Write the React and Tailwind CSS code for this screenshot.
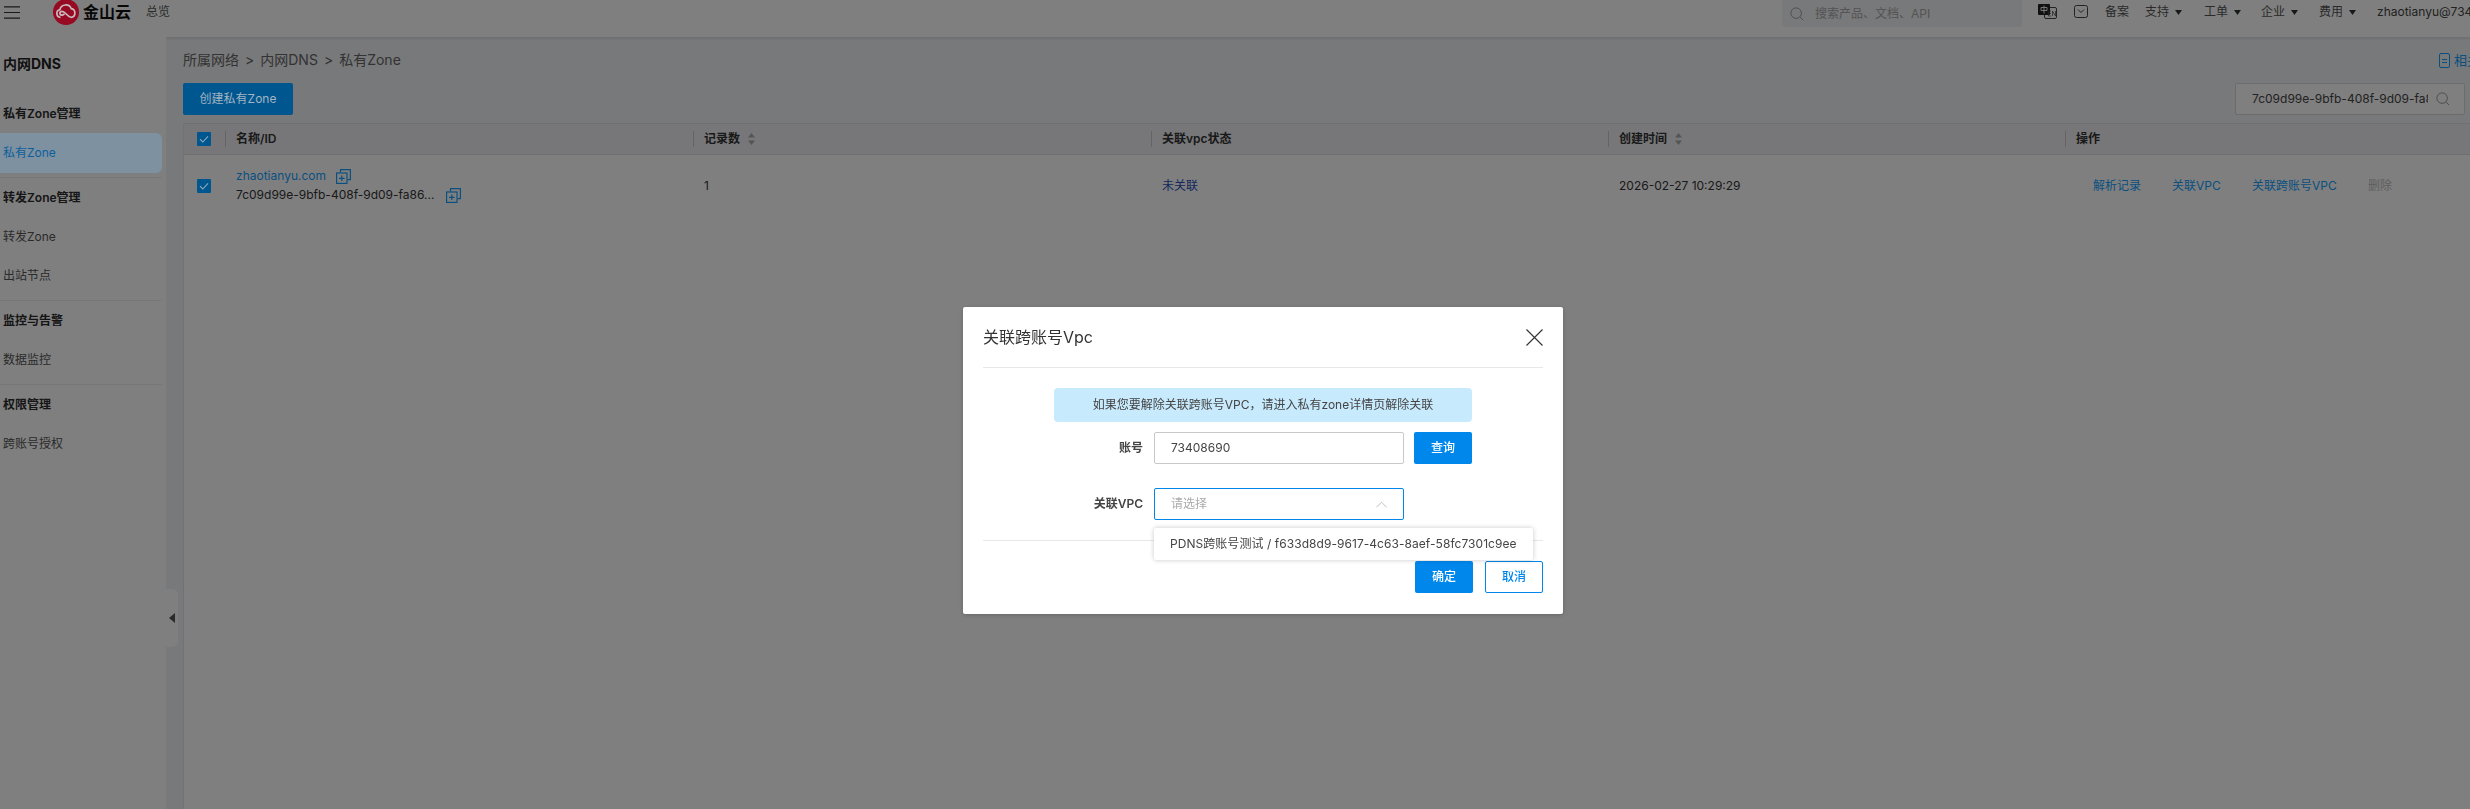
import React from "react";

const font = { fontFamily: 'Inter, "Noto Sans CJK SC", "Noto Sans", sans-serif' };

function Copy({ className = "" }) {
  return (
    <svg viewBox="0 0 15 15" className={"w-[15px] h-[15px] " + className} fill="none" stroke="#14a0ff" strokeWidth="1.2">
      <path d="M4.5 3.5V.6h9.9v10h-2.9" />
      <rect x=".6" y="4" width="10.4" height="10.4" />
      <path d="M5.8 6.6v5.4M3 9.3h5.6" />
    </svg>
  );
}

function Check() {
  return (
    <span className="relative z-30 flex w-[14px] h-[14px] items-center justify-center rounded-[1px] bg-[#00568f]">
      <svg viewBox="0 0 14 14" className="w-[14px] h-[14px]" fill="none" stroke="#8fa9bd" strokeWidth="1.1">
        <path d="M3 7.2l2.8 2.8L11 4.4" />
      </svg>
    </span>
  );
}

function Sort() {
  return (
    <svg viewBox="0 0 7 14" className="w-[7px] h-[14px] ml-[8px]" fill="#a9a9a9">
      <path d="M3.5 1L7 5.5H0zM3.5 13L0 8.5h7z" />
    </svg>
  );
}

function Caret() {
  return (
    <svg viewBox="0 0 7 5" className="w-[7px] h-[5px] ml-[6px]" fill="#333">
      <path d="M0 0h7L3.5 5z" />
    </svg>
  );
}

function TopMenu({ label, width }) {
  return (
    <span className={"flex items-center " + width}>
      <span>{label}</span>
      <Caret />
    </span>
  );
}

function HeadCell({ label, sort }) {
  return (
    <div className="flex items-center h-full">
      <span className="w-px h-[16px] bg-[#c9c9c9]" />
      <span className="ml-[10px] font-semibold text-[#333]">{label}</span>
      {sort && <Sort />}
    </div>
  );
}

function SideGroup({ children, last, pad = "pb-[5px]" }) {
  return <div className={"mr-[4px] " + (last ? "" : "border-b border-[#efefef] " + pad)}>{children}</div>;
}

function SideTitle({ children }) {
  return <div className="h-[39px] pl-[3px] flex items-center text-[12px] font-semibold text-[#2c2c2c]">{children}</div>;
}

function SideItem({ children, active }) {
  return (
    <div
      className={
        "pl-[3px] flex items-center text-[12px] rounded-r-[6px] " +
        (active ? "relative z-30 h-[40px] bg-[#7e91a1] text-[#0c5f9c]" : "h-[39px] text-[#555]")
      }
    >
      {children}
    </div>
  );
}

export default function App() {
  return (
    <div className="relative h-[809px] w-full overflow-hidden bg-[#f0f2f5] text-[12px]" style={font}>
      <header className="relative h-[37px] bg-white flex items-start shadow-[0_1px_3px_rgba(0,0,0,0.12)] overflow-hidden">
        <div className="w-[1782px] shrink-0 flex items-start">
          <svg viewBox="0 0 16 13" className="ml-[4px] mt-[6px] w-[16px] h-[13px]" fill="none" stroke="#333" strokeWidth="1.2">
            <path d="M0 .8h16M0 6.5h16M0 12.2h16" />
          </svg>
          <svg viewBox="0 0 26 26" className="relative z-30 ml-[33px] -mt-[1px] w-[26px] h-[26px]">
            <circle cx="13" cy="13" r="13" fill="#960a23" />
            <path
              d="M7.5 18.300a3.900 3.900 0 0 1-.6-7.700 6 6 0 0 1 11.400-.9 4.400 4.400 0 0 1 .2 8.600c-1.800 0-3-.9-5.300-3.300-2-2.100-3-2.700-4.300-2.700a1.950 1.950 0 0 0 0 3.900c1 0 1.700-.5 2.500-1.300"
              fill="none"
              stroke="#c9b9bd"
              strokeWidth="1.7"
            />
          </svg>
          <span className="ml-[4px] mt-[1px] text-[16px] leading-[22px] font-semibold text-[#111]">金山云</span>
          <span className="ml-[15px] mt-[4px] leading-[16px] text-[#555]">总览</span>
        </div>
        <div className="w-[240px] h-[27px] shrink-0 rounded-b-[3px] bg-[#f1f2f4] flex items-center pl-[8px] text-[12px] text-[#a8a8a8]">
          <svg viewBox="0 0 16 16" className="w-[14px] h-[14px]" fill="none" stroke="#9c9c9c" strokeWidth="1.1">
            <circle cx="7" cy="7" r="6" />
            <path d="M11.500 11.500L15 15" />
          </svg>
          <span className="ml-[11px]">搜索产品、文档、API</span>
        </div>
        <div className="ml-[16px] mt-[4px] relative w-[19px] h-[15px] shrink-0">
          <svg viewBox="0 0 19 15" className="w-[19px] h-[15px]">
            <rect x="6.500" y="3.500" width="12" height="11" rx="1.500" fill="#fff" stroke="#444" />
            <rect x="0" y="0" width="12" height="11" rx="1" fill="#222" />
            <path d="M3 3.500h6v3H3zM6 1.500v8" fill="none" stroke="#fff" strokeWidth=".9" />
            <path d="M13 7h-2.500v5H13M10.500 9.500H13M14.500 12V7l3 5V7" fill="none" stroke="#444" strokeWidth=".7" />
          </svg>
        </div>
        <svg viewBox="0 0 14 13" className="ml-[17px] mt-[5px] w-[14px] h-[13px] shrink-0" fill="none" stroke="#444" strokeWidth="1">
          <rect x=".5" y=".5" width="13" height="12" rx="2" />
          <path d="M4 4.500l3 3 3-3" />
        </svg>
        <div className="flex items-center h-[24px] ml-[17px] text-[12px] text-[#555] whitespace-nowrap shrink-0">
          <span className="w-[40px]">备案</span>
          <TopMenu label="支持" width="w-[59px]" />
          <TopMenu label="工单" width="w-[57px]" />
          <TopMenu label="企业" width="w-[58px]" />
          <TopMenu label="费用" width="w-[58px]" />
          <span className="text-[12px] text-[#444]">zhaotianyu@73408690</span>
        </div>
      </header>

      <div className="flex h-[772px]">
        <aside className="relative w-[166px] shrink-0 bg-white">
          <div className="h-[57px] pl-[3px] pt-[18px] text-[14px] leading-[18px] font-bold text-[#222]">内网DNS</div>
          <SideGroup pad="pb-[4px]">
            <SideTitle>私有Zone管理</SideTitle>
            <SideItem active>私有Zone</SideItem>
          </SideGroup>
          <SideGroup>
            <SideTitle>转发Zone管理</SideTitle>
            <SideItem>转发Zone</SideItem>
            <SideItem>出站节点</SideItem>
          </SideGroup>
          <SideGroup>
            <SideTitle>监控与告警</SideTitle>
            <SideItem>数据监控</SideItem>
          </SideGroup>
          <SideGroup last>
            <SideTitle>权限管理</SideTitle>
            <SideItem>跨账号授权</SideItem>
          </SideGroup>
          <div className="absolute left-[166px] top-[552px] w-[12px] h-[58px] bg-[#fff] rounded-r-[6px] flex items-center pl-[3px]">
            <svg viewBox="0 0 6 10" className="w-[6px] h-[10px]" fill="#555">
              <path d="M6 0v10L0 5z" />
            </svg>
          </div>
        </aside>

        <main className="flex-1 min-w-0 pl-[17px] flex flex-col">
          <div className="relative h-[46px] flex items-start pt-[13px] text-[14px] leading-[20px] text-[#666]">
            <span>所属网络</span>
            <span className="mx-[6px]">&gt;</span>
            <span>内网DNS</span>
            <span className="mx-[6px]">&gt;</span>
            <span>私有Zone</span>
            <div className="ml-auto mr-[-3px] w-[34px] flex items-center overflow-hidden whitespace-nowrap text-[#14a0ff] text-[13px]">
              <svg viewBox="0 0 11 15" className="w-[11px] h-[15px] shrink-0" fill="none" stroke="#14a0ff" strokeWidth="1">
                <rect x=".5" y=".5" width="10" height="14" rx="1.500" />
                <path d="M3 6.500h5M3 9.500h5" />
              </svg>
              <span className="ml-[4px]">相关文档</span>
            </div>
          </div>
          <div className="h-[32px] flex items-center justify-between pr-[5px]">
            <button className="relative z-30 w-[110px] h-[32px] rounded-[2px] bg-[#00568f] text-[#a3b4c2] text-[12px]">创建私有Zone</button>
            <div className="w-[230px] h-[32px] border border-[#d8d8d8] rounded-[2px] bg-white flex items-center pl-[16px] pr-[14px] text-[#444]">
              <span className="flex-1 overflow-hidden whitespace-nowrap text-[12px]">7c09d99e-9bfb-408f-9d09-fa86</span>
              <svg viewBox="0 0 16 16" className="ml-[8px] w-[14px] h-[14px] shrink-0" fill="none" stroke="#999" strokeWidth="1.1">
                <circle cx="7" cy="7" r="6" />
                <path d="M11.500 11.500L15 15" />
              </svg>
            </div>
          </div>
          <section className="mt-[8px] flex-1 bg-white border-l border-[#e4e4e4]">
            <div className="h-[32px] grid grid-cols-[41px_468px_458px_457px_457px_1fr] items-center bg-[#eeeff2] border-y border-[#dedede]">
              <div className="pl-[13px]"><Check /></div>
              <HeadCell label="名称/ID" />
              <HeadCell label="记录数" sort />
              <HeadCell label="关联vpc状态" />
              <HeadCell label="创建时间" sort />
              <HeadCell label="操作" />
            </div>
            <div className="h-[61px] grid grid-cols-[41px_468px_458px_457px_457px_1fr] items-center text-[#333]">
              <div className="pl-[13px]"><Check /></div>
              <div className="pl-[11px]">
                <div className="flex items-center h-[19px]">
                  <span className="text-[#14a0ff] text-[12px]">zhaotianyu.com</span>
                  <Copy className="ml-[10px]" />
                </div>
                <div className="flex items-center h-[19px]">
                  <span>7c09d99e-9bfb-408f-9d09-fa86...</span>
                  <Copy className="ml-[12px]" />
                </div>
              </div>
              <div className="pl-[11px]">1</div>
              <div className="pl-[11px] text-[#2a4fb8]">未关联</div>
              <div className="pl-[11px]">2026-02-27 10:29:29</div>
              <div className="pl-[28px] flex items-center text-[#14a0ff] whitespace-nowrap">
                <span className="w-[79px]">解析记录</span>
                <span className="w-[80px]">关联VPC</span>
                <span className="w-[116px]">关联跨账号VPC</span>
                <span className="text-[#bdbdbd]">删除</span>
              </div>
            </div>
          </section>
        </main>
      </div>

      <div className="fixed inset-0 z-20 bg-black/50 pl-[963px] pt-[307px]">
        <div className="relative w-[600px] h-[307px] bg-white rounded-[2px] px-[20px] shadow-[0_1px_4px_rgba(0,0,0,0.2)]">
          <div className="h-[61px] border-b border-[#e8e8e8] flex items-center justify-between">
            <span className="text-[16px] text-[#333]">关联跨账号Vpc</span>
            <svg viewBox="0 0 17 17" className="w-[17px] h-[17px]" fill="none" stroke="#333" strokeWidth="1.1">
              <path d="M.5.5l16 16M16.500.5l-16 16" />
            </svg>
          </div>
          <div className="h-[173px] border-b border-[#e8e8e8] pt-[20px] pl-[71px]">
            <div className="w-[418px] h-[34px] rounded-[4px] bg-[#c8eafd] flex items-center justify-center text-[#444]">
              如果您要解除关联跨账号VPC，请进入私有zone详情页解除关联
            </div>
            <div className="mt-[10px] flex items-center">
              <label className="w-[100px] pr-[11px] text-right font-semibold text-[#444]">账号</label>
              <div className="w-[250px] h-[32px] border border-[#c9c9c9] rounded-[2px] flex items-center pl-[16px] text-[#444]">73408690</div>
              <button className="ml-[10px] w-[58px] h-[32px] rounded-[2px] bg-[#0087ec] text-white font-medium">查询</button>
            </div>
            <div className="mt-[24px] flex items-center">
              <label className="w-[100px] pr-[11px] text-right font-semibold text-[#444]">关联VPC</label>
              <div className="relative w-[250px] h-[32px] border border-[#0087ec] rounded-[2px] flex items-center justify-between pl-[16px] pr-[16px] text-[#aaa]">
                <span>请选择</span>
                <svg viewBox="0 0 12 7" className="w-[11px] h-[7px]" fill="none" stroke="#bbb" strokeWidth="1">
                  <path d="M.5 6.500L6 1l5.500 5.500" />
                </svg>
                <div className="absolute -left-px top-[39px] z-10 w-[379px] h-[32px] rounded-[2px] bg-white shadow-[0_0_5px_rgba(0,0,0,0.22)] flex items-center pl-[16px] text-[#444] whitespace-nowrap tracking-[0.05px]">
                  PDNS跨账号测试 / f633d8d9-9617-4c63-8aef-58fc7301c9ee
                </div>
              </div>
            </div>
          </div>
          <div className="pt-[20px] flex justify-end gap-[12px]">
            <button className="w-[58px] h-[32px] rounded-[2px] bg-[#0087ec] text-white font-medium">确定</button>
            <button className="w-[58px] h-[32px] rounded-[2px] border border-[#0087ec] text-[#0087ec] font-medium">取消</button>
          </div>
        </div>
      </div>
    </div>
  );
}
